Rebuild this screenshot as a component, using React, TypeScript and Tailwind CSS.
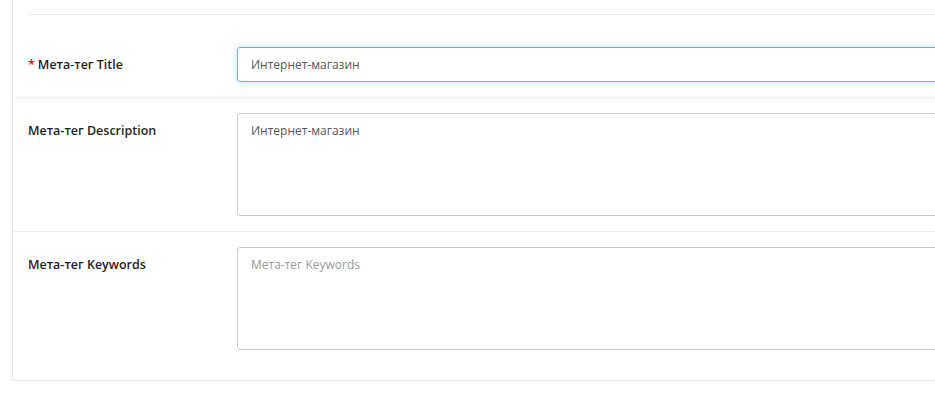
export default function App() {
  return (
    <div className="h-[407px] w-[935px] overflow-hidden bg-white font-['Open_Sans',sans-serif]">
      <div className="ml-[12px] w-[1000px] border-b border-l border-[#e8e8e8]">
        <div className="pl-[15px] pt-[14px]">
          <div className="h-px bg-[#ececec]" />
        </div>

        <Row first label="Мета-тег Title" required>
          <input
            defaultValue="Интернет-магазин"
            className="h-[35px] w-full rounded-[3px] border border-[#66afe9] px-[13px] text-[12px] text-[#555] shadow-[0_0_6px_rgba(102,175,233,0.35)] outline-none"
          />
        </Row>

        <Row label="Мета-тег Description">
          <textarea
            defaultValue="Интернет-магазин"
            className="block h-[103px] w-full resize-none rounded-[3px] border border-[#ccc] px-[13px] pb-[7px] pt-[8px] text-[12px] leading-[18px] text-[#555] outline-none"
          />
        </Row>

        <Row label="Мета-тег Keywords" last>
          <textarea
            placeholder="Мета-тег Keywords"
            className="block h-[103px] w-full resize-none rounded-[3px] border border-[#ccc] px-[13px] pb-[7px] pt-[8px] text-[12px] leading-[18px] text-[#555] outline-none placeholder:text-[#999]"
          />
        </Row>
      </div>
    </div>
  )
}

function Row({
  label,
  required,
  first,
  last,
  children,
}: {
  label: string
  required?: boolean
  first?: boolean
  last?: boolean
  children: React.ReactNode
}) {
  return (
    <div
      className={`flex ${first ? 'pt-[32px]' : 'border-t border-[#ededed] pt-[15px]'} ${
        last ? 'pb-[30px]' : 'pb-[15px]'
      }`}
    >
      <label className="w-[224px] shrink-0 pl-[15px] pt-[9px] text-[12.5px] font-semibold leading-[18px] text-[#1e1e1e]">
        {required && <span className="mr-[3px] text-[#f00]">*</span>}
        {label}
      </label>
      <div className="flex-1">{children}</div>
    </div>
  )
}
